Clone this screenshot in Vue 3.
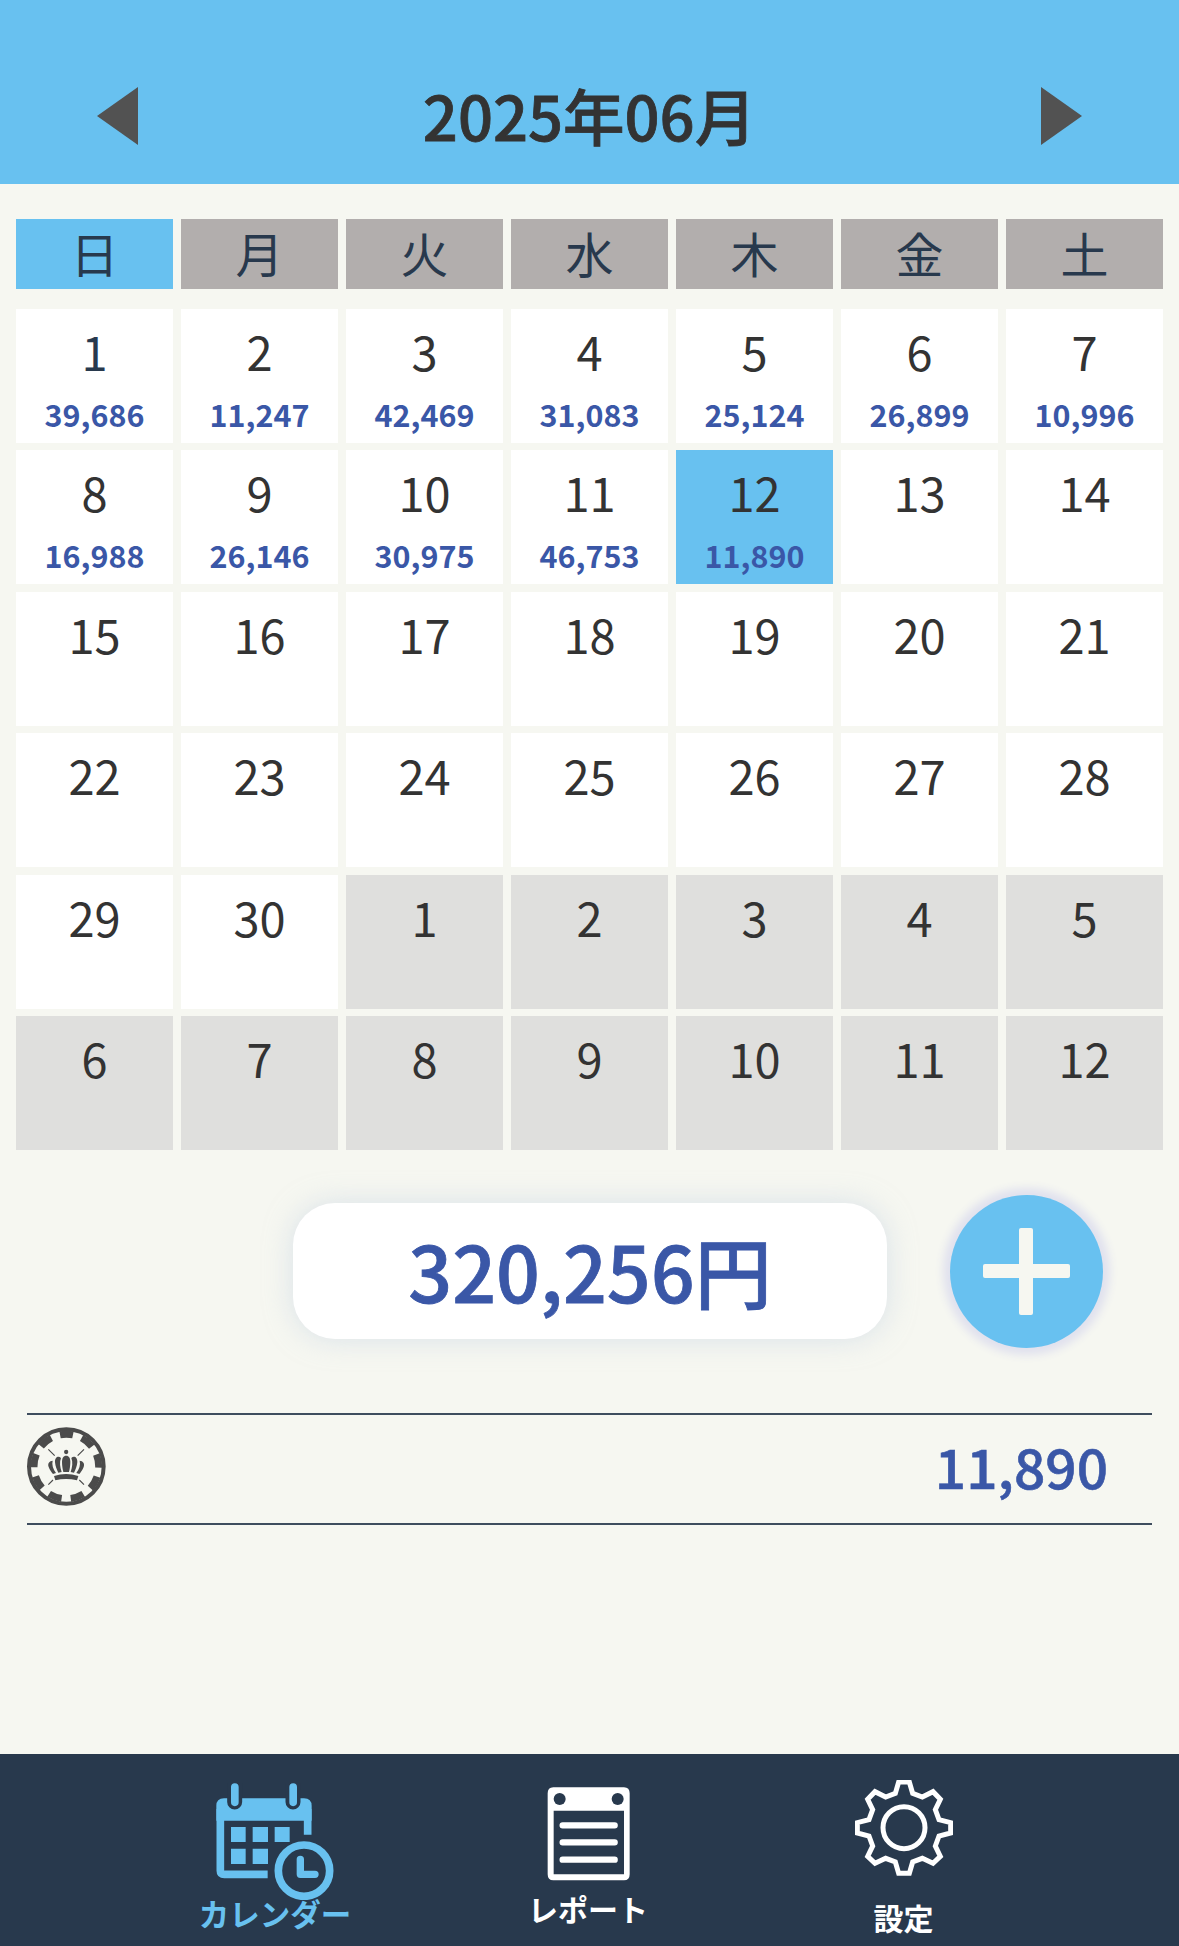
<template>
  <div class="page">
    <header class="header">
      <button class="arrow" aria-label="前の月" @click="moveMonth(-1)">
        <svg width="41" height="58" viewBox="0 0 41 58"><path d="M41 0V58L0 29Z" /></svg>
      </button>
      <h1>{{ title }}</h1>
      <button class="arrow" aria-label="次の月" @click="moveMonth(1)">
        <svg width="41" height="58" viewBox="0 0 41 58"><path d="M0 0V58L41 29Z" /></svg>
      </button>
    </header>

    <main class="main">
      <div class="weekdays">
        <div v-for="(w, i) in weekdays" :key="w" :class="['weekday', { active: i === 0 }]">{{ w }}</div>
      </div>

      <div class="days">
        <div
          v-for="(d, i) in days"
          :key="i"
          :class="['day', { other: d.other, selected: d.key === selected, first: i === 0 }]"
          @click="selected = d.key"
        >
          <span class="date">{{ d.date }}</span>
          <span v-if="d.amount" class="amount">{{ format(d.amount) }}</span>
        </div>
      </div>

      <div class="summary">
        <div class="total">{{ format(total) }}円</div>
        <button class="add" aria-label="追加">
          <svg width="87" height="87" viewBox="0 0 87 87">
            <rect x="36" y="0" width="14" height="87" rx="2" />
            <rect x="0" y="36" width="87" height="14" rx="2" />
          </svg>
        </button>
      </div>

      <div class="record">
        <svg class="chip" width="79" height="79" viewBox="81 81 237 237">
          <circle cx="199" cy="199.500" r="112" fill="none" stroke="#4b4b4b" stroke-width="12" />
          <circle
            cx="199"
            cy="199.500"
            r="97"
            fill="none"
            stroke="#4b4b4b"
            stroke-width="21"
            stroke-dasharray="40 27.720"
            stroke-dashoffset="20"
            transform="rotate(-90 199 199.500)"
          />
          <g stroke="#4b4b4b" stroke-width="3.500">
            <path d="M145 148L164 167M252 148L233 167M145 254L159 240M252 254L238 240" />
          </g>
          <g fill="#4b4b4b">
            <circle cx="198.500" cy="156" r="6.500" />
            <path d="M162 228Q198 216 235 228L231 241Q198 233 166 241Z" />
            <path d="M198.500 167C207 167 211 174 211 186C211 198 209 208 207 216H190C188 208 186 198 186 186C186 174 190 167 198.500 167Z" />
            <path d="M183 174C175 166 164 172 165 187C166 199 171 210 175 218L185 216C180 201 178 187 183 174Z" />
            <path d="M214 174C222 166 233 172 232 187C231 199 226 210 222 218L212 216C217 201 219 187 214 174Z" />
            <path d="M158 182C148 182 142 191 146 201C149 209 154 216 159 222L168 219C159 207 155 194 158 182Z" />
            <path d="M239 182C249 182 255 191 251 201C248 209 243 216 238 222L229 219C238 207 242 194 239 182Z" />
          </g>
        </svg>
        <span class="record-amount">{{ format(11890) }}</span>
      </div>
    </main>

    <nav class="nav">
      <a class="nav-item calendar">
        <svg width="118" height="117" viewBox="109 127 354 351">
          <path
            d="M122 205V390Q122 401 134 401H264M384 282V205"
            fill="none"
            stroke="#68c1f0"
            stroke-width="23"
          />
          <path d="M110 240V196Q110 173 133 173H373Q396 173 396 196V240Z" fill="#68c1f0" />
          <path
            d="M165 120V184M340 120V184"
            stroke="#28394d"
            stroke-width="45"
            stroke-linecap="round"
          />
          <path
            d="M165.500 139V185M340.500 139V185"
            stroke="#68c1f0"
            stroke-width="23"
            stroke-linecap="round"
          />
          <path
            d="M154 259H198V304H154ZM219 259H265V304H219ZM285 259H330V304H285ZM154 324H198V370H154ZM219 324H265V370H219Z"
            fill="#68c1f0"
          />
          <circle cx="373" cy="390" r="77" fill="none" stroke="#68c1f0" stroke-width="23" />
          <path
            d="M362 356V401H406"
            fill="none"
            stroke="#68c1f0"
            stroke-width="22"
            stroke-linecap="round"
            stroke-linejoin="round"
          />
        </svg>
        <span>カレンダー</span>
      </a>
      <a class="nav-item report">
        <svg width="83" height="94" viewBox="139 140 249 282">
          <path
            fill="#fff"
            fill-rule="evenodd"
            d="M158 141H370Q387 141 387 159V402Q387 420 370 420H158Q141 420 141 402V159Q141 141 158 141ZM159 211V402H370V211Z"
          />
          <circle cx="177" cy="176" r="18" fill="#28394d" />
          <circle cx="351" cy="176" r="18" fill="#28394d" />
          <path
            d="M186 255H342M186 306H342M186 358H342"
            stroke="#fff"
            stroke-width="19"
            stroke-linecap="round"
          />
        </svg>
        <span>レポート</span>
      </a>
      <a class="nav-item settings">
        <svg width="98" height="96" viewBox="105 120 294 288">
          <g fill="none" stroke="#fff" stroke-width="15">
            <path
              d="M236 126H268L278 160L307 171L339 155L361 178L346 209L357 239L392 248V279L357 288L346 318L361 349L339 370L307 355L278 366L268 400H236L226 366L197 355L165 370L143 349L158 318L147 288L112 279V248L147 239L158 209L143 178L165 155L197 171L226 160Z"
            />
            <circle cx="252" cy="263" r="63" />
          </g>
        </svg>
        <span>設定</span>
      </a>
    </nav>
  </div>
</template>

<script setup>
import { ref, computed } from 'vue'

const weekdays = ['日', '月', '火', '水', '木', '金', '土']

const year = ref(2025)
const month = ref(6)
const selected = ref('2025-6-12')

const amounts = {
  '2025-6': [39686, 11247, 42469, 31083, 25124, 26899, 10996, 16988, 26146, 30975, 46753, 11890],
}

const title = computed(() => `${year.value}年${String(month.value).padStart(2, '0')}月`)

const monthAmounts = computed(() => amounts[`${year.value}-${month.value}`] || [])

const total = computed(() => monthAmounts.value.reduce((sum, n) => sum + n, 0))

// 6週間分を表示する
const days = computed(() => {
  const start = new Date(year.value, month.value - 1, 1).getDay()
  return Array.from({ length: 42 }, (_, i) => {
    const d = new Date(year.value, month.value - 1, i - start + 1)
    const other = d.getMonth() !== month.value - 1
    return {
      key: `${d.getFullYear()}-${d.getMonth() + 1}-${d.getDate()}`,
      date: d.getDate(),
      other,
      amount: other ? 0 : monthAmounts.value[d.getDate() - 1],
    }
  })
})

function format(n) {
  return n.toLocaleString('en-US')
}

function moveMonth(step) {
  const d = new Date(year.value, month.value - 1 + step, 1)
  year.value = d.getFullYear()
  month.value = d.getMonth() + 1
}
</script>

<style>
body {
  margin: 0;
  background: #f6f7f1;
}
</style>

<style scoped>
.page {
  display: flex;
  flex-direction: column;
  height: 1946px;
  overflow: hidden;
  background: #f6f7f1;
  color: #333;
  font-family: 'Noto Sans CJK JP', sans-serif;
}
button {
  padding: 0;
  border: none;
  background: none;
  cursor: pointer;
}
.header {
  display: flex;
  justify-content: space-between;
  align-items: center;
  box-sizing: border-box;
  height: 184px;
  padding: 48px 97px 0;
  background: #68c1f0;
}
.header h1 {
  margin: 0 0 3px;
  font-size: 61.5px;
  font-weight: 500;
  line-height: 90px;
  -webkit-text-stroke: 0.8px currentColor;
}
.arrow {
  display: flex;
}
.arrow path {
  fill: #525252;
}
.main {
  flex: 1;
}
.weekdays,
.days {
  display: grid;
  grid-template-columns: repeat(7, 157px);
  column-gap: 8px;
  padding: 0 16px;
}
.weekdays {
  margin-top: 35px;
}
.weekday {
  height: 70px;
  background: #b2aead;
  color: #28394d;
  font-size: 48px;
  line-height: 67px;
  text-align: center;
}
.weekday.active {
  background: #68c1f0;
}
.days {
  grid-auto-rows: 134px;
  row-gap: 7.4px;
  margin-top: 20px;
}
.day {
  display: flex;
  flex-direction: column;
  align-items: center;
  background: #fff;
}
.day.other {
  background: #dfdfdd;
}
.day.selected {
  background: #68c1f0;
}
.day.first .date {
  color: #28394d;
}
.date {
  font-size: 47px;
  line-height: 84px;
}
.amount {
  color: #3a57a7;
  font-size: 30.5px;
  font-weight: 700;
  line-height: 42px;
}
.summary {
  display: flex;
  align-items: center;
  margin-top: 45px;
  padding-left: 293px;
}
.total {
  width: 594px;
  height: 136px;
  border-radius: 42px;
  background: #fff;
  box-shadow: 0 0 28px rgba(190, 205, 225, 0.5);
  color: #3a57a7;
  font-size: 77px;
  font-weight: 500;
  line-height: 133px;
  text-align: center;
  -webkit-text-stroke: 0.8px currentColor;
}
.add {
  display: flex;
  justify-content: center;
  align-items: center;
  width: 153px;
  height: 153px;
  margin-left: 63px;
  border-radius: 50%;
  background: #68c1f0;
  box-shadow: 0 0 8px 7px #e0e1ee;
}
.add rect {
  fill: #f6f7f1;
}
.record {
  display: flex;
  justify-content: space-between;
  align-items: center;
  box-sizing: border-box;
  height: 112px;
  margin: 65px 27px 0;
  padding-right: 44px;
  border-top: 2px solid #3e4d5e;
  border-bottom: 2px solid #3e4d5e;
}
.chip {
  margin-bottom: 4px;
}
.record-amount {
  margin-bottom: 7px;
  color: #3a57a7;
  font-size: 55px;
  font-weight: 500;
  line-height: 80px;
  -webkit-text-stroke: 0.6px currentColor;
}
.nav {
  display: grid;
  grid-template-columns: repeat(3, 314px);
  height: 192px;
  padding-left: 118px;
  background: #28394d;
}
.nav-item {
  display: flex;
  flex-direction: column;
  align-items: center;
  color: #fff;
  font-size: 30px;
  font-weight: 700;
  line-height: 40px;
}
.calendar {
  padding-top: 29px;
  color: #68c1f0;
}
.calendar span {
  margin-top: -7px;
  font-size: 30.5px;
}
.report {
  padding-top: 33px;
  padding-right: 2px;
}
.report span {
  margin-top: 7px;
}
.settings {
  padding-top: 26px;
  padding-left: 1px;
}
.settings span {
  margin-top: 21px;
}
</style>
